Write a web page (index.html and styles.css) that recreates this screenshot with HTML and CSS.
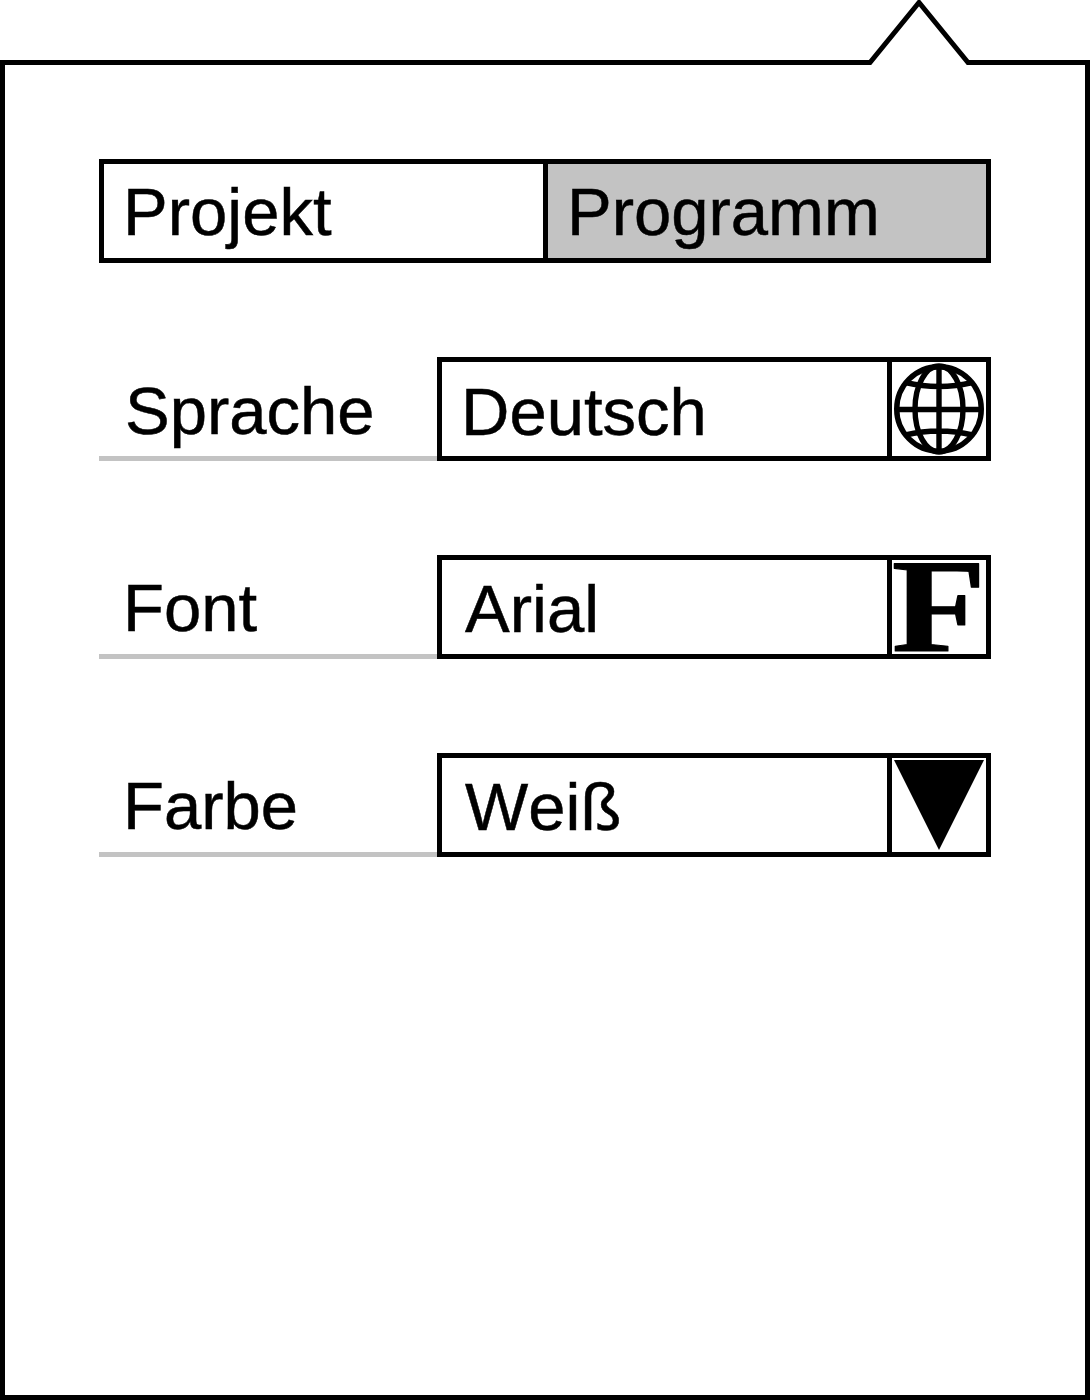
FILE: index.html
```html
<!DOCTYPE html>
<html lang="de">
<head>
<meta charset="utf-8">
<title>Einstellungen</title>
<link rel="stylesheet" href="styles.css">
</head>
<body>
<main class="popover">
  <svg class="pointer" width="110" height="66" viewBox="864 0 110 66" aria-hidden="true">
    <path class="pointer-fill" d="M870 66V62.5L919 2.5L968 62.5V66Z"/>
    <path class="pointer-line" d="M864 62.5H870L919 2.5L968 62.5H974"/>
  </svg>
  <nav class="tabs">
    <a class="tab">Projekt</a>
    <a class="tab tab-active">Programm</a>
  </nav>
  <section class="row">
    <label class="label label-language">Sprache</label>
    <div class="field">
      <span class="value value-language">Deutsch</span>
      <svg class="icon" viewBox="0 0 94 94" aria-hidden="true">
        <g class="globe">
          <circle cx="47" cy="47" r="42.3"/>
          <ellipse cx="47" cy="47" rx="24" ry="43"/>
          <path d="M47 4V90M4 47.5H90M13.5 20.5Q47 28.5 80.5 20.5M13.5 73Q47 65 80.5 73"/>
        </g>
      </svg>
    </div>
  </section>
  <section class="row">
    <label class="label">Font</label>
    <div class="field">
      <span class="value">Arial</span>
      <svg class="icon" viewBox="0 0 94 94" aria-hidden="true">
        <text class="letter" transform="translate(-0.2 91.3) scale(1.15 1)">F</text>
      </svg>
    </div>
  </section>
  <section class="row">
    <label class="label">Farbe</label>
    <div class="field">
      <span class="value">Weiß</span>
      <svg class="icon" viewBox="0 0 94 94" aria-hidden="true">
        <path d="M2 2H92L47 92Z"/>
      </svg>
    </div>
  </section>
</main>
</body>
</html>
```
FILE: styles.css
```css
* { box-sizing: border-box; }

body {
  margin: 0;
  padding-top: 60px;
  background: #fff;
  color: #000;
  font: 67px/94px "Liberation Sans", Arial, sans-serif;
  font-kerning: none;
  -webkit-text-stroke: 0.5px #000;
}

.popover {
  position: relative;
  display: flex;
  flex-direction: column;
  gap: 94px;
  height: 1340px;
  padding: 94px;
  border: 5px solid #000;
}

.pointer {
  position: absolute;
  top: -65px;
  left: 859px;
}

.pointer-fill { fill: #fff; }

.pointer-line {
  fill: none;
  stroke: #000;
  stroke-width: 5;
}

.tabs {
  display: flex;
  height: 104px;
  border: 5px solid #000;
}

.tab {
  flex: 0 0 439px;
  padding: 1px 0 0 19px;
}

.tab-active {
  flex: 1;
  border-left: 5px solid #000;
  background: #c3c3c3;
}

.row {
  display: flex;
  height: 104px;
}

.label {
  width: 338px;
  padding: 6px 0 0 24px;
  border-bottom: 5px solid #c3c3c3;
}

.label-language {
  padding: 7px 0 0 26px;
}

.field {
  display: flex;
  flex: 1;
  border: 5px solid #000;
}

.value {
  width: 450px;
  padding: 2px 0 0 23px;
  border-right: 5px solid #000;
}

.value-language {
  padding: 3px 0 0 19px;
}

.icon {
  display: block;
  width: 94px;
  height: 94px;
  overflow: visible;
}

.globe {
  fill: none;
  stroke: #000;
  stroke-width: 5.4;
}

.letter {
  font: bold 134px "Liberation Serif", "Times New Roman", serif;
  stroke: #000;
  stroke-width: 1.2;
  stroke-linejoin: round;
}
```
